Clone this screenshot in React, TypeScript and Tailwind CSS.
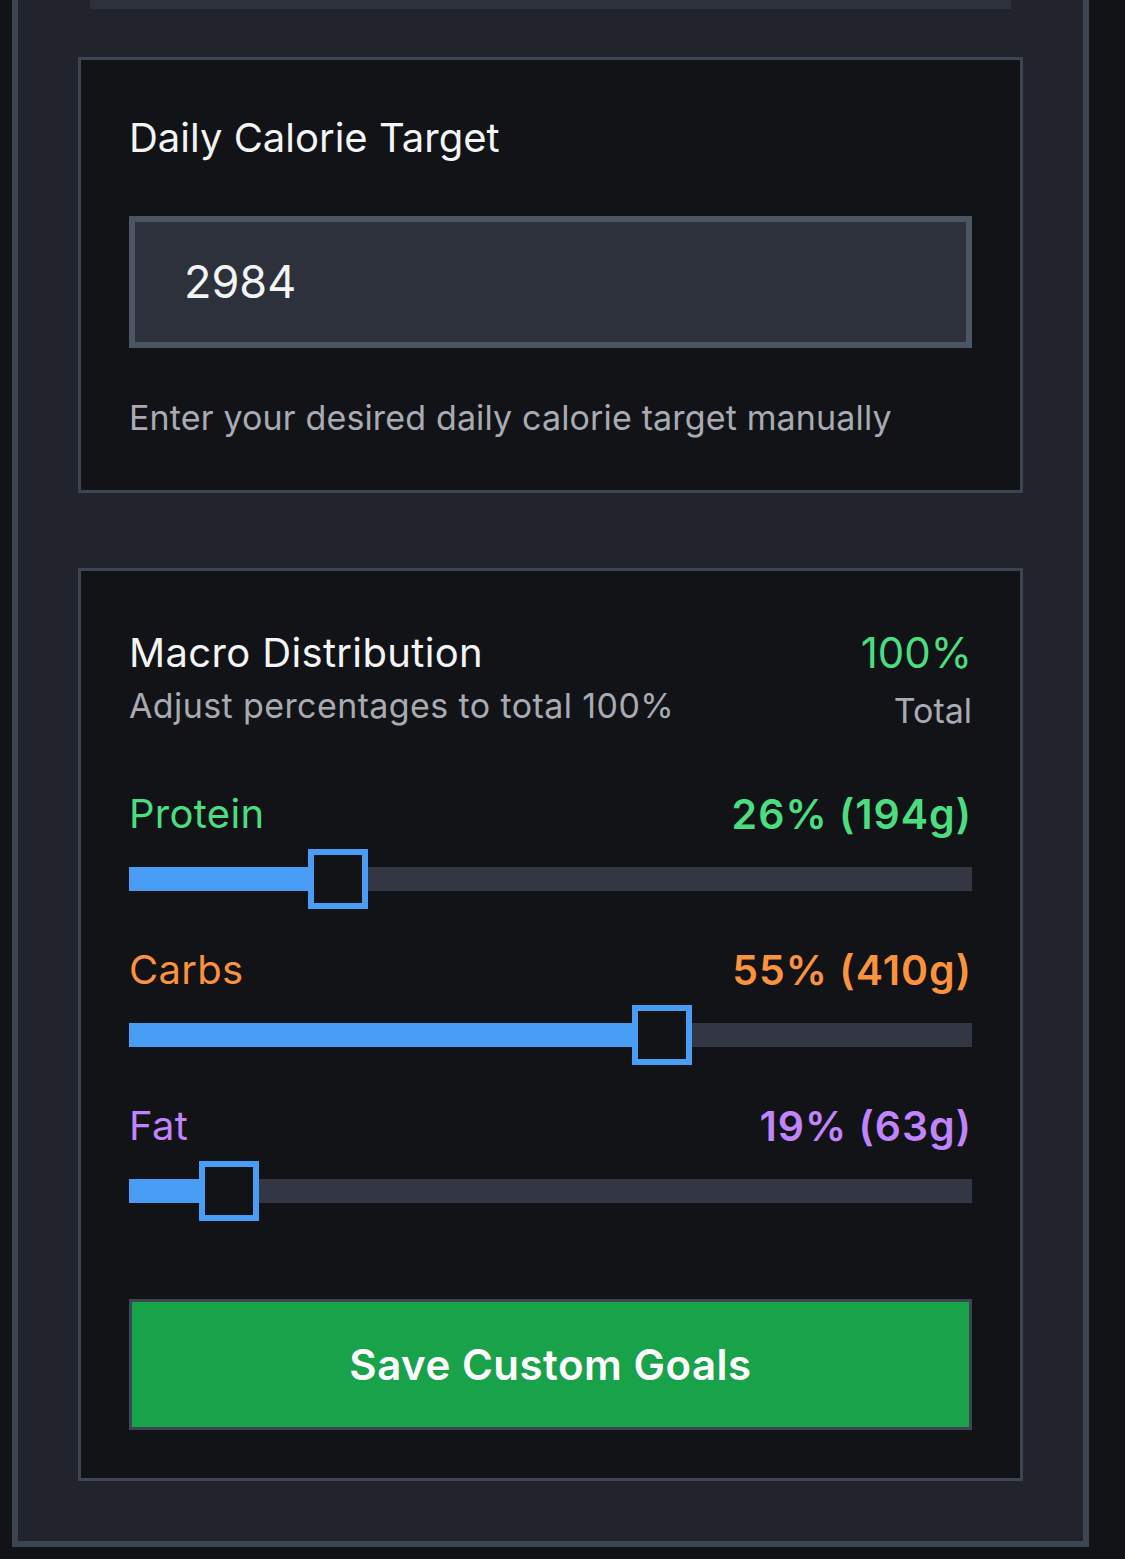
import React from "react"

const macros = [
  { name: "Protein", value: "26% (194g)", color: "text-[#4ade80]", thumb: 179 },
  { name: "Carbs", value: "55% (410g)", color: "text-[#fb923c]", thumb: 503 },
  { name: "Fat", value: "19% (63g)", color: "text-[#c084fc]", thumb: 70 },
]

function MacroSlider({ name, value, color, thumb }: (typeof macros)[number]) {
  return (
    <div className="flex flex-col">
      <div className="flex justify-between items-center leading-[48px]">
        <span className={`${color} text-[40px] tracking-[0.3px]`}>{name}</span>
        <span className={`${color} text-[41px] font-semibold tracking-[1px]`}>{value}</span>
      </div>
      <div className="mt-[11px] h-[60px] flex items-center">
        <div className="relative h-[24px] w-full bg-[#333743]">
          <div className="absolute left-0 top-0 h-full bg-[#4a9df5]" style={{ width: thumb + 30 }} />
          <div
            className="absolute top-[-18px] h-[60px] w-[60px] border-[6px] border-[#4a9df5] bg-[#121317]"
            style={{ left: thumb }}
          />
        </div>
      </div>
    </div>
  )
}

export default function App() {
  return (
    <main className="min-h-screen bg-[#121317] font-['Inter',sans-serif] text-[#f3f4f6]">
      <div className="ml-[12px] w-[1077px] border-x-[6px] border-b-[6px] border-[#3d4452] bg-[#21242d] px-[60px] pb-[60px]">
        <div className="mx-[12px] h-[9px] bg-[#2d313c]" />

        <section className="mt-[48px] border-[3px] border-[#3d4452] bg-[#121317] px-[48px] py-[48px]">
          <h2 className="text-[40px] leading-[60px]">Daily Calorie Target</h2>
          <div className="mt-[48px] h-[132px] border-[6px] border-[#4b5563] bg-[#2d313c] pl-[49px] flex items-center text-[45px]">
            2984
          </div>
          <p className="mt-[46px] text-[34px] tracking-[0.15px] leading-[48px] text-[#a8abb3]">
            Enter your desired daily calorie target manually
          </p>
        </section>

        <section className="mt-[75px] border-[3px] border-[#3d4452] bg-[#121317] px-[48px] pt-[50px] pb-[48px]">
          <div className="flex justify-between items-start">
            <div className="flex flex-col">
              <h2 className="text-[40px] tracking-[0.35px] leading-[64px]">Macro Distribution</h2>
              <p className="text-[34px] tracking-[0.4px] leading-[42px] text-[#a8abb3]">Adjust percentages to total 100%</p>
            </div>
            <div className="flex flex-col items-end">
              <span className="text-[42px] leading-[64px] text-[#4ade80]">100%</span>
              <span className="text-[34px] leading-[52px] text-[#a8abb3]">Total</span>
            </div>
          </div>

          <div className="mt-[53px] flex flex-col gap-[37px]">
            {macros.map((m) => (
              <MacroSlider key={m.name} {...m} />
            ))}
          </div>

          <button className="mt-[78px] h-[131px] w-full border-[3px] border-[#3d4452] bg-[#18a34a] text-[42px] tracking-[0.5px] font-semibold text-white">
            Save Custom Goals
          </button>
        </section>
      </div>
    </main>
  )
}
